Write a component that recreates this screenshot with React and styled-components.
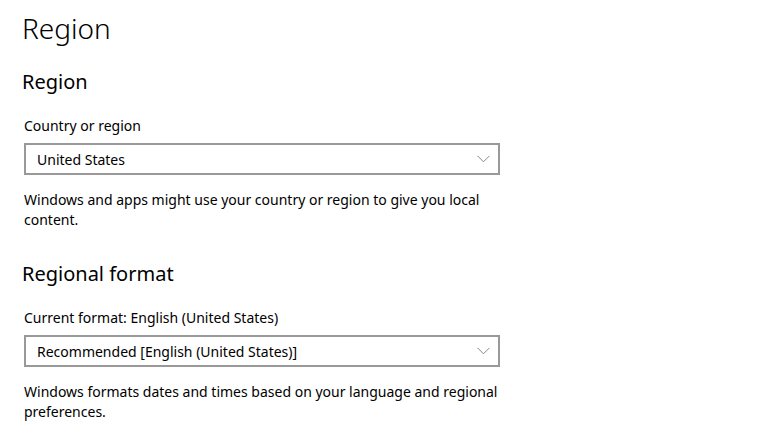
import React from "react";
import styled, { createGlobalStyle } from "styled-components";

const Global = createGlobalStyle`
  html, body { margin: 0; padding: 0; background: #fff; }
  body { font-family: "Segoe UI", "Noto Sans", "Open Sans", sans-serif; color: #000; }
`;

const Page = styled.div`
  width: 768px;
  height: 439px;
  overflow: hidden;
  box-sizing: border-box;
  padding: 8px 0 0 22px;
  display: flex;
  flex-direction: column;
`;

const Title = styled.h1`
  margin: 0;
  font-size: 28px;
  font-weight: 300;
  line-height: 40px;
  color: #000;
`;

const SectionTitle = styled.h2`
  margin: ${(p) => p.$top}px 0 0 0;
  font-size: 20px;
  font-weight: 400;
  line-height: 28px;
  color: #000;
`;

const Label = styled.div`
  margin: 20px 0 0 2px;
  font-size: 14px;
  line-height: 20px;
`;

const Select = styled.div`
  margin: 7px 0 0 2px;
  width: 476px;
  height: 32px;
  box-sizing: border-box;
  border: 2px solid #999;
  display: flex;
  align-items: center;
  justify-content: space-between;
  padding: 0 8px 0 11px;
  font-size: 14px;
`;

const Chevron = styled.svg`
  width: 13px;
  height: 8px;
  display: block;
`;

const Description = styled.p`
  margin: 15px 0 0 2px;
  width: 480px;
  font-size: 14px;
  line-height: 20px;
`;

function Dropdown({ value }) {
  return (
    <Select>
      <span>{value}</span>
      <Chevron viewBox="0 0 13 8">
        <path d="M0.5 0.8 L6.5 6.8 L12.5 0.8" fill="none" stroke="#888" strokeWidth="1" />
      </Chevron>
    </Select>
  );
}

export default function App() {
  return (
    <>
      <Global />
      <Page>
        <Title>Region</Title>
        <SectionTitle $top={20}>Region</SectionTitle>
        <Label>Country or region</Label>
        <Dropdown value="United States" />
        <Description>
          Windows and apps might use your country or region to give you local content.
        </Description>
        <SectionTitle $top={30}>Regional format</SectionTitle>
        <Label>Current format: English (United States)</Label>
        <Dropdown value="Recommended [English (United States)]" />
        <Description>
          Windows formats dates and times based on your language and regional preferences.
        </Description>
      </Page>
    </>
  );
}
